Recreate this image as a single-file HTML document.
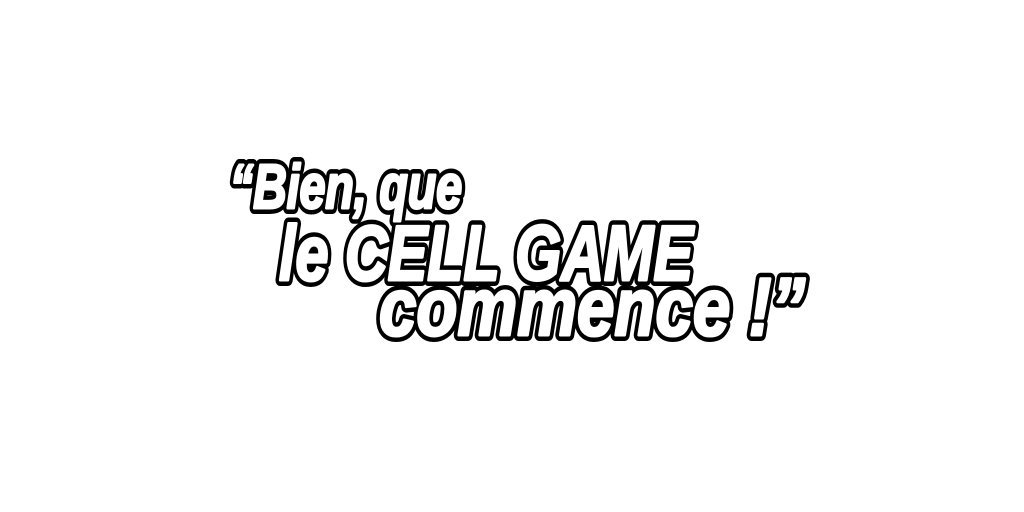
<!DOCTYPE html>
<html><head><meta charset="utf-8"><style>html,body{margin:0;padding:0;background:#fff;width:1024px;height:512px;overflow:hidden}</style></head>
<body>
<svg width="1024" height="512" viewBox="0 0 1024 512" xmlns="http://www.w3.org/2000/svg">
<defs>
<g id="t" font-family="'Liberation Sans Narrow','Liberation Sans',sans-serif" font-weight="bold" font-style="italic">
<text x="230" y="208" font-size="62" textLength="232" lengthAdjust="spacingAndGlyphs">“Bien, que</text>
<text x="279" y="280" font-size="78" textLength="414" lengthAdjust="spacingAndGlyphs">le CELL GAME</text>
<text x="379" y="335" font-size="82" textLength="426" lengthAdjust="spacingAndGlyphs">commence !”</text>
</g>
</defs>
<use href="#t" fill="#000" stroke="#000" stroke-width="12" stroke-linejoin="round"/>
<use href="#t" fill="#fff" stroke="#fff" stroke-width="3" stroke-linejoin="round"/>
</svg>
</body></html>
